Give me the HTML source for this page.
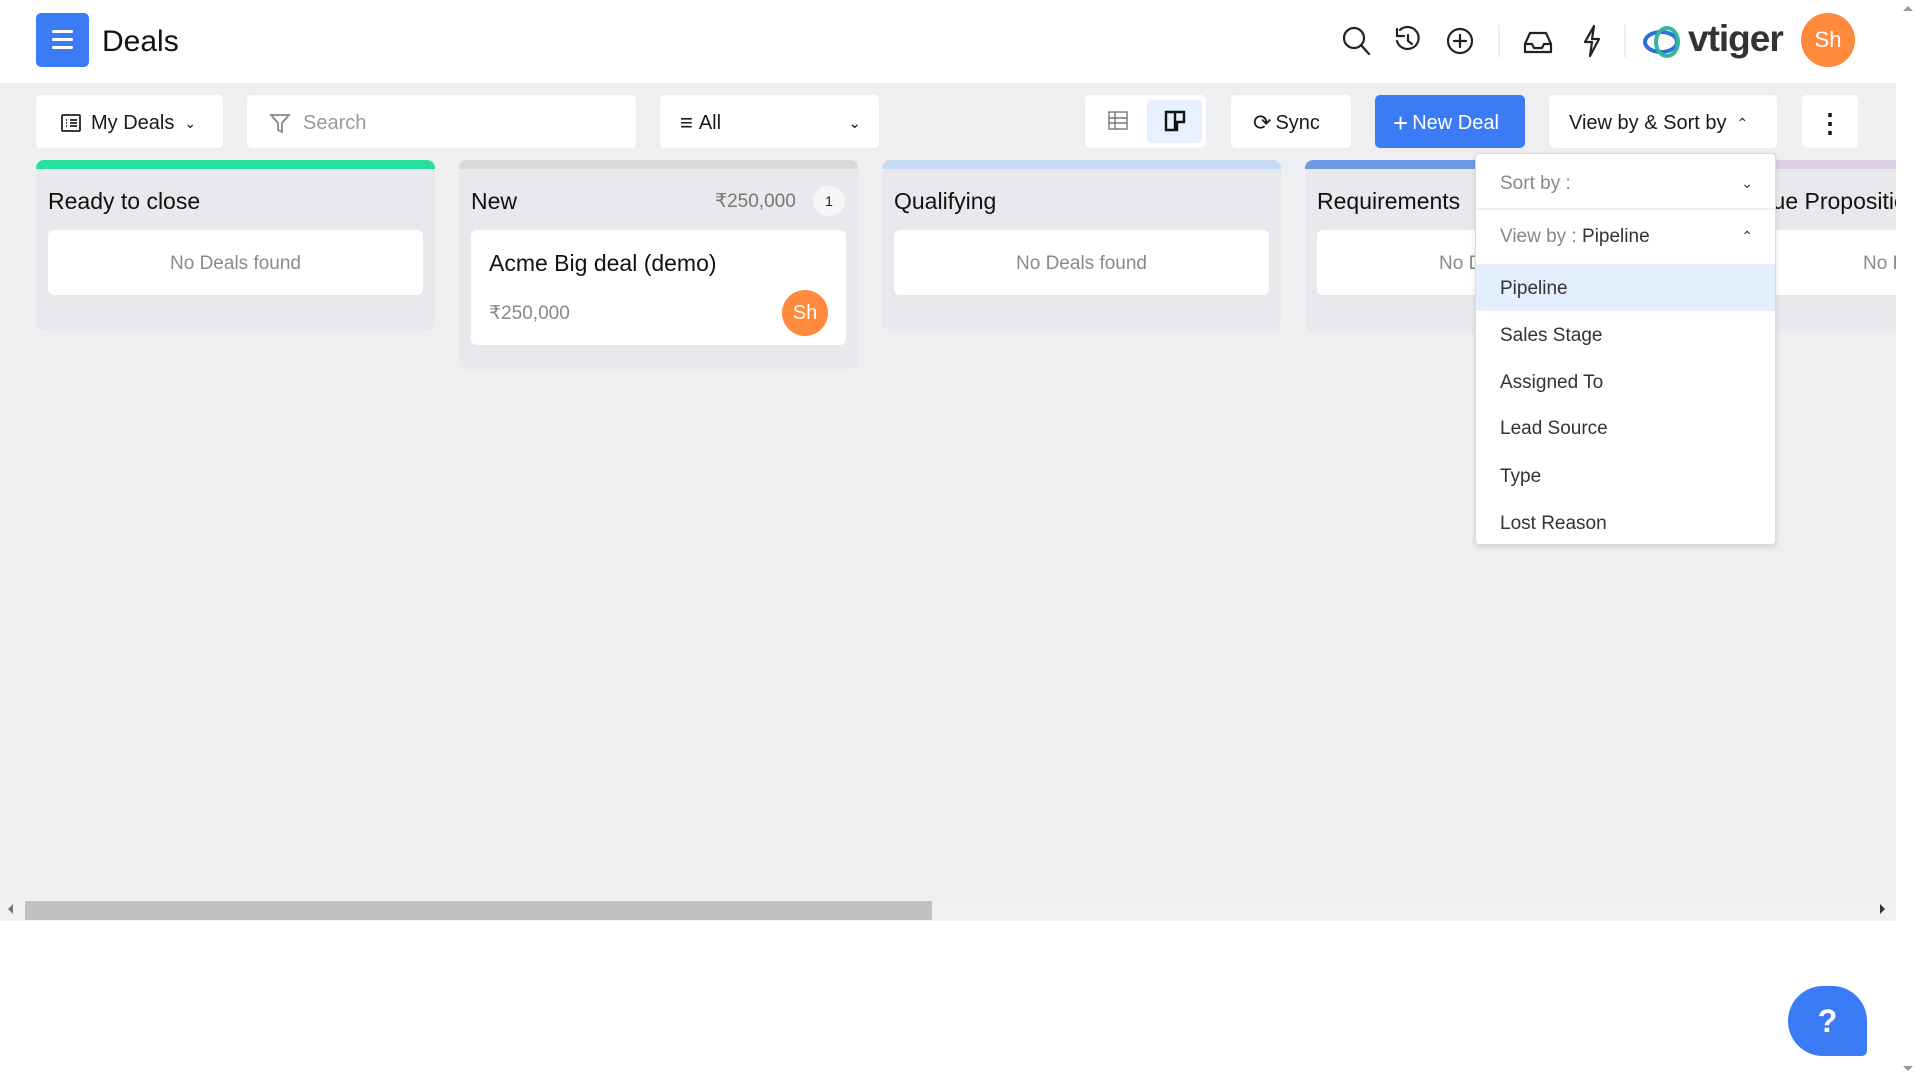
<!DOCTYPE html>
<html><head><meta charset="utf-8"><style>
*{box-sizing:border-box;margin:0;padding:0}
body{width:1920px;height:1079px;overflow:hidden;background:#fff;font-family:"Liberation Sans",Arial,sans-serif;color:#1a1a1a;position:relative}
.abs{position:absolute}
.hdr{left:0;top:0;width:1896px;height:83px;background:#fff}
.main{left:0;top:83px;width:1896px;height:838px;background:#eeeff1;overflow:hidden}
.btn{position:absolute;background:#fff;border-radius:5px;height:53px;top:95px;display:flex;align-items:center;font-size:20px;padding-top:3px}
.col{position:absolute;top:77px;width:399px;background:#e8e9ec;border-radius:8px;overflow:hidden}
.col .bar{height:9px}
.col .t{position:absolute;left:12px;top:28px;font-size:23px;color:#111}
.card{position:absolute;left:12px;top:70px;width:375px;background:#fff;border-radius:6px;height:65px;display:flex;align-items:center;justify-content:center;color:#8a8a8a;font-size:19px;padding-top:2px}
.dd{left:1475px;top:153px;width:301px;height:392px;background:#fff;border:1px solid #dcdcdc;border-radius:4px;box-shadow:0 2px 6px rgba(0,0,0,.12)}
.dd .r{position:absolute;left:0;width:299px;height:47px;padding-left:24px;display:flex;align-items:center;font-size:19px;color:#333;padding-top:2px}
</style></head><body>
<div class="abs hdr"></div>
<div class="abs" style="left:36px;top:13px;width:53px;height:54px;background:#3b7cf6;border-radius:5px">
<div class="abs" style="left:16px;top:17px;width:21px;height:3px;background:#fff;border-radius:2px"></div>
<div class="abs" style="left:16px;top:25px;width:21px;height:3px;background:#fff;border-radius:2px"></div>
<div class="abs" style="left:16px;top:33px;width:21px;height:3px;background:#fff;border-radius:2px"></div></div>
<div class="abs" style="left:102px;top:25px;font-size:30px;color:#111">Deals</div>
<svg class="abs" style="left:1340px;top:22px" width="460" height="40" viewBox="0 0 460 40" fill="none" stroke="#222" stroke-width="2.2" stroke-linecap="round" stroke-linejoin="round">
<circle cx="14" cy="16" r="10"/><path d="M21 23l8 9"/>
<path d="M60 8a11 11 0 1 1-3 11"/><path d="M57 7v7h7"/><path d="M68 13v6l4 3"/>
<circle cx="120" cy="19" r="12"/><path d="M120 13v12M114 19h12"/>
<path d="M159 3v32" stroke="#ddd" stroke-width="1"/>
<path d="M185 22l5-11h16l5 11v8h-26zM185 22h7l2 4h8l2-4h7"/>
<path d="M254 4l-9 16h7l-2 14 9-17h-7z"/>
<path d="M285 3v32" stroke="#ddd" stroke-width="1"/>
</svg>
<svg class="abs" style="left:1641px;top:24px" width="46" height="36" viewBox="0 0 46 36" fill="none" stroke-width="4"><ellipse cx="20" cy="18" rx="16" ry="10" stroke="#2a72d9"/><ellipse cx="26" cy="18" rx="11" ry="14" stroke="#36b5a0"/></svg>
<div class="abs" style="left:1688px;top:18px;font-size:37px;font-weight:bold;color:#333;letter-spacing:-1px">vtiger</div>
<div class="abs" style="left:1801px;top:13px;width:54px;height:54px;border-radius:50%;background:#ff8a3d;color:#fff;font-size:22px;display:flex;align-items:center;justify-content:center">Sh</div>

<div class="abs main">
<div class="col" style="left:36px;height:171px"><div class="bar" style="background:#26e09c"></div><div class="t">Ready to close</div><div class="card">No Deals found</div></div>
<div class="col" style="left:459px;height:209px"><div class="bar" style="background:#d9d9d9"></div><div class="t">New</div>
<div class="abs" style="left:256px;top:30px;font-size:19px;color:#777">₹250,000</div>
<div class="abs" style="left:354px;top:26px;width:32px;height:30px;border-radius:15px;background:#f5f6f8;font-size:14px;display:flex;align-items:center;justify-content:center">1</div>
<div class="card" style="height:115px;display:block"><div class="abs" style="left:18px;top:20px;font-size:23px;color:#111">Acme Big deal (demo)</div><div class="abs" style="left:18px;top:72px;font-size:19px;color:#888">₹250,000</div><div class="abs" style="left:311px;top:60px;width:46px;height:46px;border-radius:50%;background:#ff8a3d;color:#fff;font-size:20px;display:flex;align-items:center;justify-content:center">Sh</div></div></div>
<div class="col" style="left:882px;height:171px"><div class="bar" style="background:#c9daf6"></div><div class="t">Qualifying</div><div class="card">No Deals found</div></div>
<div class="col" style="left:1305px;height:171px"><div class="bar" style="background:#6c9be8"></div><div class="t">Requirements</div><div class="card">No Deals found</div></div>
<div class="col" style="left:1729px;height:171px"><div class="bar" style="background:#ddd0e6"></div><div class="t">Value Proposition</div><div class="card">No Deals found</div></div>
</div>

<div class="btn" style="left:36px;width:187px;padding-left:25px"><svg width="20" height="18" viewBox="0 0 20 18" fill="none" stroke="#222" stroke-width="1.8"><rect x="1" y="1" width="18" height="16" rx="1"/><path d="M5 6h1M9 6h7M5 9h1M9 9h7M5 12h1M9 12h7"/></svg><span style="margin-left:10px">My Deals</span><span style="margin-left:10px;font-size:14px">&#8964;</span></div>
<div class="btn" style="left:247px;width:389px;padding-left:22px;color:#999"><svg width="22" height="22" viewBox="0 0 22 22" fill="none" stroke="#888" stroke-width="1.8"><path d="M2 3h18l-7 8v9l-4-2v-7z"/></svg><span style="margin-left:12px">Search</span></div>
<div class="btn" style="left:660px;width:219px;padding-left:20px"><span style="font-size:22px">&#8801;</span><span style="margin-left:6px">All</span><span style="position:absolute;right:18px;font-size:15px">&#8964;</span></div>
<div class="btn" style="left:1085px;width:121px"><svg class="abs" style="left:23px;top:16px" width="20" height="20" viewBox="0 0 20 20" fill="none" stroke="#777" stroke-width="1.4"><rect x="1" y="1" width="18" height="17"/><path d="M1 7h18M1 12h18M7 1v17"/></svg><div class="abs" style="left:62px;top:5px;width:55px;height:43px;background:#e6f0ff;border-radius:4px"></div><svg class="abs" style="left:79px;top:15px" width="22" height="22" viewBox="0 0 22 22" fill="none" stroke="#111" stroke-width="2.4"><path d="M2 2h18v10h-7v8H2z M11 2v18"/></svg></div>
<div class="btn" style="left:1231px;width:120px;padding-left:22px"><span style="font-size:22px">&#10227;</span><span style="margin-left:4px">Sync</span></div>
<div class="btn" style="left:1375px;width:150px;background:#3b7cf6;color:#fff;padding-left:18px"><span style="font-size:26px;margin-right:4px">+</span>New Deal</div>
<div class="btn" style="left:1549px;width:228px;padding-left:20px">View by &amp; Sort by<span style="margin-left:10px;font-size:14px">&#8963;</span></div>
<div class="btn" style="left:1802px;width:56px;justify-content:center;font-size:26px;font-weight:bold">&#8942;</div>

<div class="abs dd">
<div class="r" style="top:5px;color:#888">Sort by :<span style="position:absolute;right:22px;font-size:14px;color:#333">&#8964;</span></div>
<div class="abs" style="left:0;top:54px;width:299px;height:2px;background:#f0f0f0"></div>
<div class="r" style="top:58px"><span style="color:#888">View by :&nbsp;</span>Pipeline<span style="position:absolute;right:22px;font-size:14px">&#8963;</span></div>
<div class="r" style="top:110px;background:#e4effd">Pipeline</div>
<div class="r" style="top:157px">Sales Stage</div>
<div class="r" style="top:204px">Assigned To</div>
<div class="r" style="top:250px">Lead Source</div>
<div class="r" style="top:298px">Type</div>
<div class="r" style="top:345px">Lost Reason</div>
</div>

<div class="abs" style="left:0;top:900px;width:1896px;height:21px;background:#f1f1f1"></div>
<div class="abs" style="left:25px;top:901px;width:907px;height:19px;background:#c1c1c1"></div>
<div class="abs" style="left:8px;top:904px;width:0;height:0;border:5px solid transparent;border-right-color:#777;border-left:0"></div>
<div class="abs" style="left:1880px;top:904px;width:0;height:0;border:5px solid transparent;border-left-color:#333;border-right:0"></div>
<div class="abs" style="left:1896px;top:0;width:24px;height:1079px;background:#fff"></div>
<div class="abs" style="left:1903px;top:6px;border:5px solid transparent;border-bottom-color:#999;border-top:0"></div>
<div class="abs" style="left:1903px;top:1066px;border:5px solid transparent;border-top-color:#999;border-bottom:0"></div>
<div class="abs" style="left:1788px;top:986px;width:79px;height:70px;background:#3b7cf6;border-radius:40px 40px 6px 40px;color:#fff;font-size:32px;font-weight:bold;display:flex;align-items:center;justify-content:center">?</div>
</body></html>
